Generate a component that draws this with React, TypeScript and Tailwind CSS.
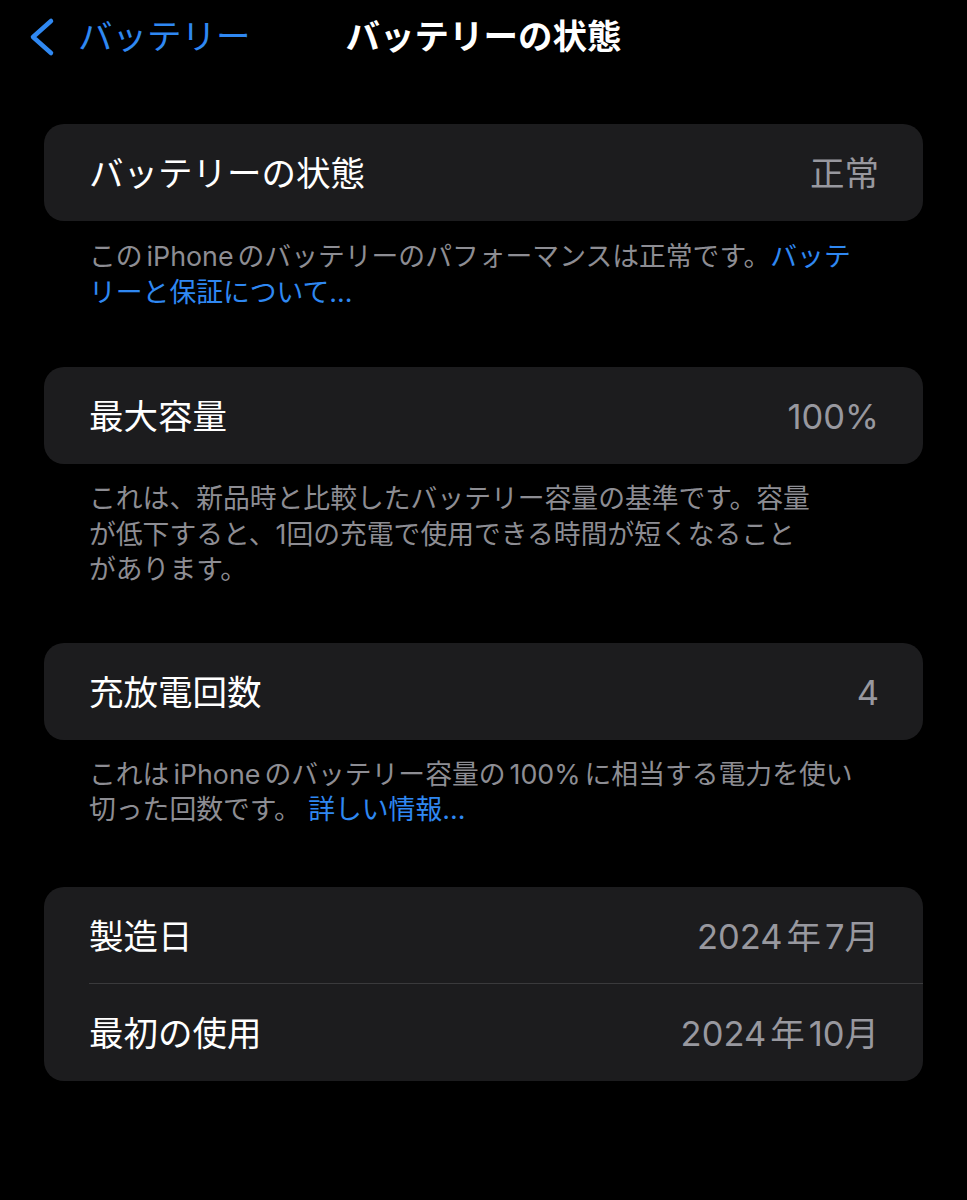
import React from 'react'

const FONT = "font-['Inter','Noto_Sans_CJK_JP',sans-serif]"

function Row({ label, value, divider }: { label: string; value: React.ReactNode; divider?: boolean }) {
  return (
    <div className="relative flex h-[97px] items-center justify-between pl-[45px] pr-[44px] pt-[4px]">
      <span className="text-[34.5px] leading-none text-white">{label}</span>
      <span className="text-[34.5px] leading-none text-[#98989f]">{value}</span>
      {divider && <div className="absolute bottom-0 left-[45px] right-0 h-px bg-[#3a3a3c]" />}
    </div>
  )
}

function Card({ children }: { children: React.ReactNode }) {
  return <div className="overflow-hidden rounded-[20px] bg-[#1c1c1e]">{children}</div>
}

function Footnote({ lines, className }: { lines: React.ReactNode[]; className?: string }) {
  return (
    <div className={`px-[45px] text-[26.8px] leading-[35.5px] text-[#8d8d93] ${className ?? ''}`}>
      {lines.map((l, i) => (
        <div key={i} className="whitespace-nowrap">{l}</div>
      ))}
    </div>
  )
}

const Link = ({ children }: { children: React.ReactNode }) => (
  <span className="text-[#2f88f2]">{children}</span>
)

const Gap = () => <span className="inline-block w-[4px]" />

export default function App() {
  return (
    <div className={`min-h-[1200px] w-[967px] bg-black ${FONT}`}>
      <header className="relative flex h-[74px] items-center justify-center">
        <div className="absolute left-[26px] top-0 flex h-[74px] items-center gap-[22px]">
          <svg width="30" height="40" viewBox="0 0 30 40" fill="none">
            <path d="M25 4 L7 20 L25 36" stroke="#2f88f2" strokeWidth="4.5" strokeLinecap="round" strokeLinejoin="round" />
          </svg>
          <span className="text-[34.5px] leading-none text-[#2f88f2]">バッテリー</span>
        </div>
        <h1 className="text-[34.5px] font-semibold leading-none text-white">バッテリーの状態</h1>
      </header>

      <main className="px-[44px] pt-[50px]">
        <Card>
          <Row label="バッテリーの状態" value="正常" />
        </Card>
        <Footnote
          className="pt-[18px] pb-[57px]"
          lines={[
            <>この<Gap />iPhone<Gap />のバッテリーのパフォーマンスは正常です。<Link>バッテ</Link></>,
            <Link>リーと保証について...</Link>,
          ]}
        />

        <Card>
          <Row label="最大容量" value="100%" />
        </Card>
        <Footnote
          className="pt-[17px] pb-[55px]"
          lines={[
            'これは、新品時と比較したバッテリー容量の基準です。容量',
            'が低下すると、1回の充電で使用できる時間が短くなること',
            'があります。',
          ]}
        />

        <Card>
          <Row label="充放電回数" value="4" />
        </Card>
        <Footnote
          className="pt-[17px] pb-[59px]"
          lines={[
            <>これは<Gap />iPhone<Gap />のバッテリー容量の<Gap />100%<Gap />に相当する電力を使い</>,
            <>切った回数です。 <Link>詳しい情報...</Link></>,
          ]}
        />

        <Card>
          <Row label="製造日" value={<>2024<Gap />年<Gap />7月</>} divider />
          <Row label="最初の使用" value={<>2024<Gap />年<Gap />10月</>} />
        </Card>
      </main>
    </div>
  )
}
